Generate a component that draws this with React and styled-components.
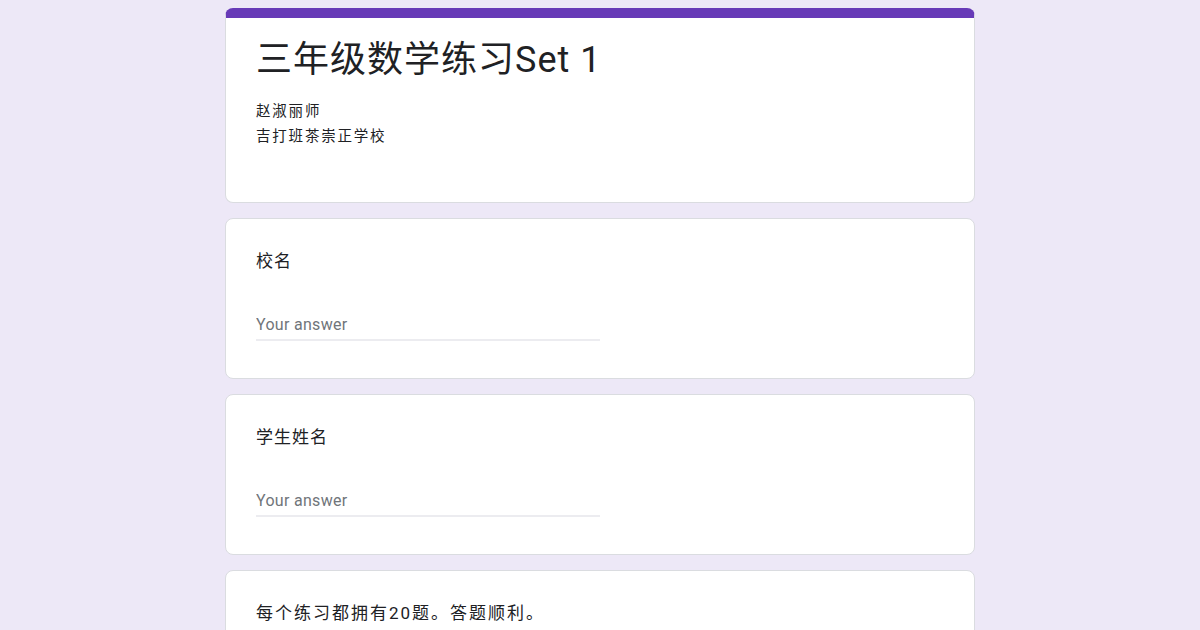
import React from "react";
import styled, { createGlobalStyle } from "styled-components";

const GlobalStyle = createGlobalStyle`
  * { box-sizing: border-box; }
  body {
    margin: 0;
    background: #ede8f7;
    font-family: Roboto, "Noto Sans CJK SC", "Noto Sans", sans-serif;
    color: #202124;
  }
`;

const Page = styled.div`
  min-height: 100vh;
  padding-top: 8px;
  display: flex;
  flex-direction: column;
  align-items: center;
  gap: 15px;
`;

const Card = styled.div`
  width: 750px;
  background: #fff;
  border: 1px solid #dadce0;
  border-radius: 8px;
  padding: 30px 30px 37px;
`;

const HeaderCard = styled(Card)`
  border-top: 10px solid #673ab7;
  padding: 20px 30px 53px;
`;

const Title = styled.h1`
  margin: 0;
  font-size: 36px;
  line-height: 44px;
  font-weight: 400;
  letter-spacing: 1px;
  color: #202124;
`;

const Description = styled.div`
  margin-top: 17px;
  font-size: 14.5px;
  line-height: 25px;
  letter-spacing: 1.8px;
  color: #202124;
`;

const Question = styled.div`
  font-size: 17px;
  line-height: 24px;
  letter-spacing: ${(p) => (p.$wide ? "2px" : "1px")};
  color: #202124;
`;

const AnswerField = styled.div`
  width: 50%;
  margin-top: 40px;
  padding-bottom: 2px;
  border-bottom: 2px solid #ececf0;
`;

const Input = styled.input`
  width: 100%;
  border: none;
  outline: none;
  padding: 0;
  background: transparent;
  font-family: Roboto, sans-serif;
  font-size: 16px;
  line-height: 24px;
  height: 24px;
  letter-spacing: 0.3px;
  color: #202124;
  &::placeholder {
    color: #70757a;
  }
`;

const questions = ["校名", "学生姓名"];

export default function App() {
  return (
    <>
      <GlobalStyle />
      <Page>
        <HeaderCard>
          <Title>三年级数学练习Set 1</Title>
          <Description>
            赵淑丽师
            <br />
            吉打班茶崇正学校
          </Description>
        </HeaderCard>
        {questions.map((q) => (
          <Card key={q}>
            <Question>{q}</Question>
            <AnswerField>
              <Input type="text" placeholder="Your answer" />
            </AnswerField>
          </Card>
        ))}
        <Card>
          <Question $wide>每个练习都拥有20题。答题顺利。</Question>
        </Card>
      </Page>
    </>
  );
}
